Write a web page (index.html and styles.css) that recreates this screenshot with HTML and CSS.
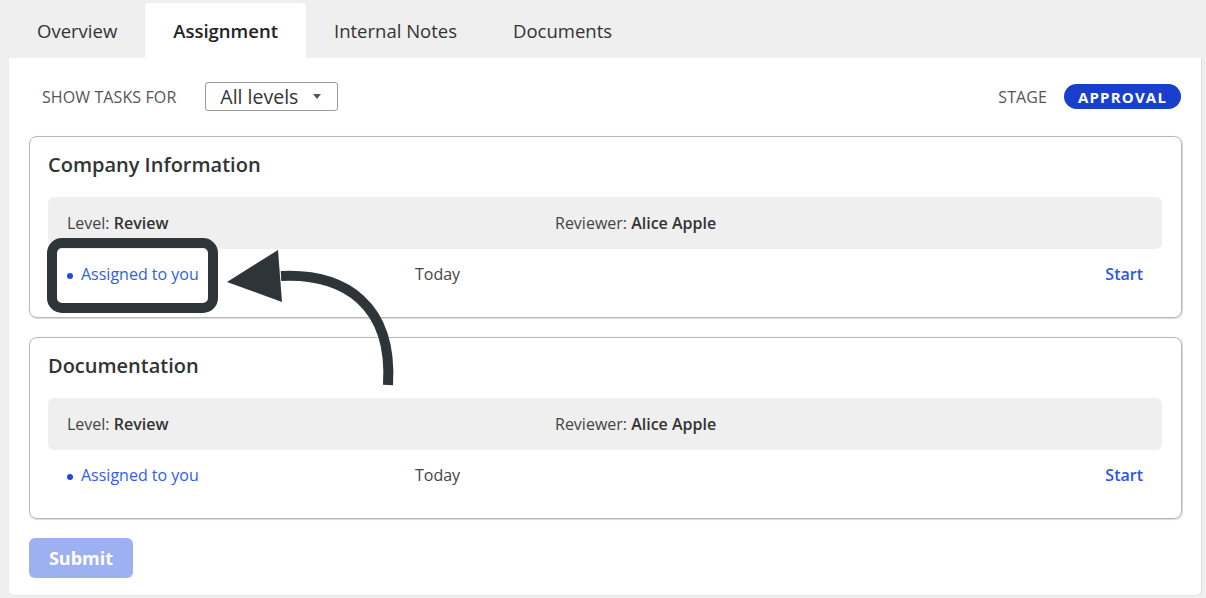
FILE: index.html
```html
<!DOCTYPE html>
<html lang="en">
<head>
<meta charset="utf-8">
<title>Assignment</title>
<link rel="stylesheet" href="styles.css">
</head>
<body>
<div class="page">
  <nav class="tabs">
    <div class="tab">Overview</div>
    <div class="tab active">Assignment</div>
    <div class="tab">Internal Notes</div>
    <div class="tab">Documents</div>
  </nav>
  <main class="panel">
    <div class="toolbar">
      <div class="filter">
        <span class="label">SHOW TASKS FOR</span>
        <div class="select">All levels <span class="caret"></span></div>
      </div>
      <div class="stage">
        <span class="label">STAGE</span>
        <span class="pill">APPROVAL</span>
      </div>
    </div>

    <section class="card">
      <h2 class="card-title">Company Information</h2>
      <div class="meta">
        <div class="meta-level">Level: <b>Review</b></div>
        <div class="meta-reviewer">Reviewer: <b>Alice Apple</b></div>
      </div>
      <div class="task">
        <div class="task-status"><span class="dot"></span>Assigned to you</div>
        <div class="task-date">Today</div>
        <a class="task-action">Start</a>
      </div>
    </section>

    <section class="card">
      <h2 class="card-title">Documentation</h2>
      <div class="meta">
        <div class="meta-level">Level: <b>Review</b></div>
        <div class="meta-reviewer">Reviewer: <b>Alice Apple</b></div>
      </div>
      <div class="task">
        <div class="task-status"><span class="dot"></span>Assigned to you</div>
        <div class="task-date">Today</div>
        <a class="task-action">Start</a>
      </div>
    </section>

    <div class="actions">
      <button class="submit">Submit</button>
    </div>
  </main>

  <svg class="annotation" width="1206" height="598" viewBox="0 0 1206 598" aria-hidden="true">
    <rect x="52" y="243" width="161" height="65" rx="10" ry="10" fill="none" stroke="#2d3539" stroke-width="10"/>
    <path d="M281 276 C 345 273, 393 305, 388 385" fill="none" stroke="#2d3539" stroke-width="10"/>
    <polygon points="227,282 278,250 282,302" fill="#2d3539"/>
  </svg>
</div>
</body>
</html>
```
FILE: styles.css
```css
* { box-sizing: border-box; }

html, body {
  margin: 0;
  padding: 0;
}

body {
  background: #efefef;
  font-family: "Open Sans", "Noto Sans", sans-serif;
  color: #333;
}

.page {
  position: relative;
  width: 1206px;
  height: 598px;
  padding-left: 9px;
}

.tabs {
  display: flex;
  height: 58px;
  padding-top: 3px;
}

.tab {
  display: flex;
  align-items: center;
  padding: 0 28px;
  font-size: 18.5px;
  color: #333;
  border-radius: 4px 4px 0 0;
}

.tab.active {
  background: #fff;
  font-weight: 600;
  color: #222;
}

.panel {
  width: 1193px;
  height: 538px;
  background: #fff;
  border-right: 1px solid #dcdcdc;
  border-bottom: 1px solid #e6e6e6;
  border-radius: 0 0 6px 6px;
  padding: 24px 19px 0 20px;
}

.toolbar {
  display: flex;
  align-items: center;
  justify-content: space-between;
  height: 29px;
  padding: 0 1px 0 13px;
  margin-bottom: 25px;
}

.filter, .stage {
  display: flex;
  align-items: center;
}

.label {
  font-size: 16px;
  color: #555;
  letter-spacing: 0.1px;
}

.filter .label { margin-right: 29px; }
.stage .label { margin-right: 17px; font-weight: 500; }

.select {
  display: flex;
  align-items: center;
  height: 29px;
  width: 133px;
  border: 1px solid #9a9a9a;
  border-radius: 3px;
  padding: 0 0 0 14px;
  font-size: 19.5px;
  color: #333;
}

.caret {
  width: 0;
  height: 0;
  margin-left: 15px;
  border-left: 4.5px solid transparent;
  border-right: 4.5px solid transparent;
  border-top: 5px solid #555;
}

.pill {
  display: inline-flex;
  align-items: center;
  justify-content: center;
  height: 25px;
  width: 117px;
  border-radius: 13px;
  background: #1a3fcc;
  color: #fff;
  font-size: 15px;
  font-weight: 700;
  letter-spacing: 1.2px;
}

.card {
  height: 182px;
  border: 1px solid #b8b8b8;
  border-radius: 8px;
  padding: 15px 19px 18px 18px;
  margin-bottom: 19px;
  box-shadow: 0.5px 0.5px 1px rgba(0,0,0,0.15);
}

.card-title {
  margin: 0 0 19px 0;
  font-size: 20px;
  line-height: 26px;
  font-weight: 600;
  color: #333;
}

.meta {
  display: flex;
  align-items: center;
  height: 52px;
  background: #efefef;
  border-radius: 6px;
  padding: 0 19px;
  font-size: 16px;
  color: #444;
}

.meta b { font-weight: 600; color: #333; }

.meta-level { width: 488px; }

.task {
  display: flex;
  align-items: center;
  height: 50px;
  padding: 0 19px;
  font-size: 16px;
}

.task-status {
  display: flex;
  align-items: center;
  width: 348px;
  color: #2f5ee8;
}

.dot {
  width: 6px;
  height: 6px;
  border-radius: 50%;
  background: #2448e0;
  margin: 4px 8px 0 0;
}

.task-date {
  flex: 1;
  color: #444;
}

.task-action {
  font-weight: 600;
  color: #2a57e4;
}

.actions { display: flex; }

.submit {
  width: 104px;
  height: 40px;
  border: none;
  border-radius: 6px;
  background: #9db1f2;
  color: #fff;
  font-family: "Open Sans", "Noto Sans", sans-serif;
  font-size: 18px;
  font-weight: 700;
  padding: 0;
}

.annotation {
  position: absolute;
  left: 0;
  top: 0;
  pointer-events: none;
}
```
